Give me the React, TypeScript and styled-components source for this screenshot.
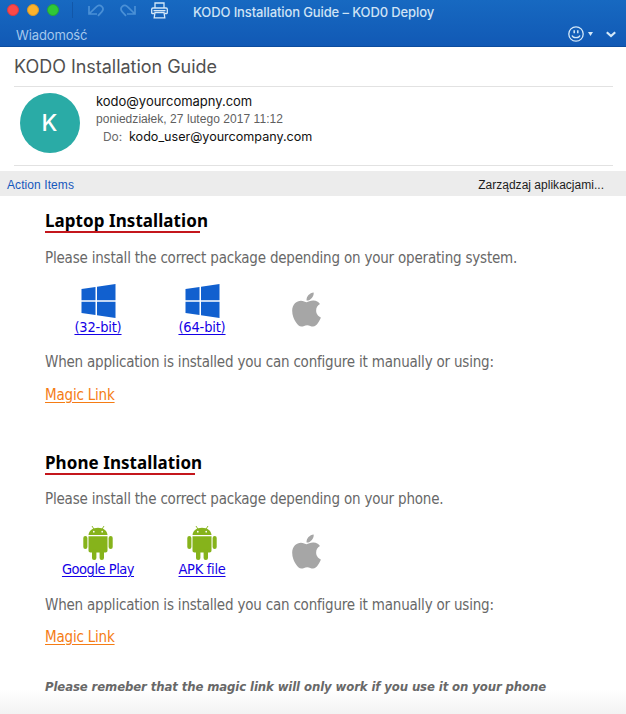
import React from "react";
import styled, { createGlobalStyle } from "styled-components";
import { FaApple } from "react-icons/fa";

const Global = createGlobalStyle`
  * { box-sizing: border-box; }
  body { margin: 0; background: #fff; }
`;

const ui = `"Inter", sans-serif`;
const arial = `"Liberation Sans", Arial, sans-serif`;
const tahoma = `"DejaVu Sans Condensed", "DejaVu Sans", sans-serif`;

const Window = styled.div`
  width: 626px;
  height: 714px;
  overflow: hidden;
  display: flex;
  flex-direction: column;
  background: #fff;
  font-family: ${ui};
  white-space: nowrap;
`;

const TitleBar = styled.header`
  height: 47px;
  flex: none;
  background: linear-gradient(#1769c1, #1159b5);
  border-bottom: 1px solid #0c4c9e;
`;

const TopRow = styled.div`
  height: 23px;
  display: flex;
  align-items: center;
  padding-left: 7px;
`;

const Lights = styled.div`
  display: flex;
  gap: 8px;
  width: 65px;
  height: 19px;
  align-items: center;
  margin-top: -3px;
`;

const Light = styled.span<{ $color: string; $edge: string }>`
  width: 12px;
  height: 12px;
  border-radius: 50%;
  background: ${(p) => p.$color};
  border: 1px solid ${(p) => p.$edge};
`;

const Divider = styled.span`
  width: 1px;
  height: 16px;
  margin-top: -3px;
  background: #1257a8;
`;

const Tools = styled.div`
  display: flex;
  align-items: center;
  margin-left: 15px;
  width: 105px;
  margin-top: -3px;
  svg { display: block; flex: none; }
  svg + svg { margin-left: 16px; }
  svg + svg + svg { margin-left: 15px; }
`;

const WindowTitle = styled.div`
  font: 500 13px/18px ${ui};
  letter-spacing: -0.115px;
  color: #cfe3f5;
  margin-top: 1px;
`;

const TabRow = styled.div`
  height: 23px;
  display: flex;
  align-items: center;
  padding: 0 10px 0 16px;
`;

const Tab = styled.span`
  font: 400 13px/18px ${ui};
  letter-spacing: -0.12px;
  color: #a5c8ec;
  flex: 1;
  margin-top: 1px;
`;

const TabIcons = styled.div`
  display: flex;
  align-items: center;
  margin-top: -1px;
  svg { display: block; }
`;

const Envelope = styled.section`
  height: 124px;
  flex: none;
  padding: 0 13px 0 14px;
`;

const Subject = styled.h1`
  margin: 0;
  height: 40px;
  border-bottom: 1px solid #e2e2e2;
  font: 400 18px/40px ${ui};
  letter-spacing: -0.03px;
  color: #505050;
`;

const Sender = styled.div`
  height: 79px;
  display: flex;
  padding: 6px 0 0 6px;
  border-bottom: 1px solid #e2e2e2;
`;

const Avatar = styled.div`
  width: 60px;
  height: 60px;
  border-radius: 50%;
  background: #2aaba6;
  color: #fff;
  font: 500 23px/61px ${ui};
  text-align: center;
  padding-right: 1px;
  margin-right: 16px;
`;

const SenderLines = styled.div`
  display: flex;
  flex-direction: column;
`;

const From = styled.div`
  height: 18px;
  font: 400 13px/16px ${ui};
  letter-spacing: -0.02px;
  color: #111;
`;

const Sent = styled.div`
  font: 400 12px/17px ${arial};
  letter-spacing: 0.051px;
  color: #5f5f5f;
`;

const To = styled.div`
  display: flex;
  padding-left: 7px;
  font: 400 12px/18px ${ui};
  letter-spacing: -0.1px;
  color: #6a6a6a;
  span {
    margin-left: 7px;
    font-size: 12.6px;
    letter-spacing: -0.02px;
    color: #111;
  }
`;

const ActionBar = styled.div`
  height: 25px;
  flex: none;
  background: #ececec;
  display: flex;
  align-items: center;
  justify-content: space-between;
  padding: 3px 22px 0 7px;
  font: 400 12px/18px ${arial};
  letter-spacing: 0.02px;
  color: #1c1c1c;
`;

const ActionLink = styled.span`
  color: #1558bd;
  letter-spacing: 0.08px;
`;

const Message = styled.main`
  flex: 1;
  padding: 0 0 0 45px;
  font: 400 15px/20px ${tahoma};
  letter-spacing: -0.2px;
  color: #686868;
  background: linear-gradient(#fff 0, #fff 494px, #f3f3f3 518px);
`;

const Section = styled.section`
  height: 242px;
`;

const Heading = styled.h2<{ $rule: number }>`
  margin: 0;
  padding-top: 13px;
  height: 37px;
  font: 700 17px/24px "Noto Sans", sans-serif;
  letter-spacing: 0.063px;
  color: #000;
  background: linear-gradient(#c4161c, #c4161c) 0 100% / ${(p) => p.$rule}px 2px no-repeat;
`;

const Lead = styled.p<{ $raised: boolean }>`
  margin: 0;
  padding-top: ${(p) => (p.$raised ? 14 : 15)}px;
  height: 34px;
`;

const Downloads = styled.div`
  display: grid;
  grid-template-columns: 104px 104px 104px;
  height: 85px;
  margin-left: 1px;
  padding-top: 17px;
`;

const Download = styled.div`
  display: flex;
  flex-direction: column;
  align-items: center;
  svg { display: block; flex: none; }
`;

const DownloadLink = styled.a<{ $spacing: number }>`
  font: 400 14.5px/19px ${tahoma};
  letter-spacing: ${(p) => p.$spacing}px;
  color: #1400e6;
  text-decoration: underline;
  text-decoration-thickness: 1px;
  text-underline-offset: 2px;
`;

const AppleSlot = styled.div`
  padding-top: 6px;
  color: #a6a6a6;
`;

const Hint = styled.p<{ $lowered: boolean }>`
  margin: 0;
  padding-top: ${(p) => (p.$lowered ? 1 : 0)}px;
  height: 20px;
`;

const Magic = styled.a`
  display: block;
  margin-top: 13px;
  color: #f57c14;
  text-decoration: underline;
  text-decoration-thickness: 1px;
  text-underline-offset: 2px;
`;

const Note = styled.p`
  margin: -4px 0 0;
  font: italic 700 13px/21px ${tahoma};
  letter-spacing: -0.107px;
`;

const CaretGap = styled.span`
  display: block;
  margin: 0 13px 0 4px;
`;

const UndoIcon = ({ flip = false }: { flip?: boolean }) => (
  <svg width="16" height="13" viewBox="0 0 16 13" fill="none" stroke="#4a90d6" strokeWidth="1.7">
    <g transform={flip ? "translate(16 0) scale(-1 1)" : undefined}>
      <path d="M1 2v8h8M1.500 9.500L8 3.200C9.800 1 12 .8 13.700 2.400c1.800 1.700 1.600 3.700 0 5.400L10 11.800" />
    </g>
  </svg>
);

const PrintIcon = () => (
  <svg width="17" height="17" viewBox="0 0 17 17" fill="none" stroke="#d4e8f8" strokeWidth="1.3">
    <path d="M4 6V1h9v5M3.500 11.500H1.300c-.4 0-.6-.3-.6-.7V7.200C.7 6.500 1.200 6 1.900 6h13.200c.7 0 1.200.5 1.200 1.200v3.600c0 .4-.2.7-.6.7h-2.200" />
    <path d="M2.500 8.600h12" />
    <path d="M4 10.500l-.8 5.300h10.600L13 10.500z" />
  </svg>
);

const SmileIcon = () => (
  <svg width="16" height="16" viewBox="0 0 16 16" fill="none" stroke="#d4e8f8" strokeWidth="1.3">
    <circle cx="8" cy="8" r="7.2" />
    <path d="M6.200 4.300v3M9.800 4.300v3" strokeWidth="1.5" />
    <path d="M4 9.500c1 2.800 7 2.800 8 0" />
  </svg>
);

const CaretIcon = () => (
  <svg width="5" height="4" viewBox="0 0 5 4">
    <path d="M0 0h5L2.500 4z" fill="#d4e8f8" />
  </svg>
);

const ChevronIcon = () => (
  <svg width="10" height="7" viewBox="0 0 10 7" fill="none" stroke="#d4e8f8" strokeWidth="2.2">
    <path d="M.8 1.200L5 5l4.200-3.800" />
  </svg>
);

const WindowsLogo = () => (
  <svg width="35" height="34" viewBox="0 0 35 34" fill="#1160cf">
    <path d="M.5 5l14-2v13.300H.5zM16 2.800L34.500 0v16.300H16zM.5 17.700h14V31l-14-2zM16 17.700h18.500V34L16 31.200z" />
  </svg>
);

const AndroidLogo = () => (
  <svg width="30" height="34" viewBox="0 1 30 34" fill="#86b31b">
    <path d="M9 1l2.200 3.500M21 1l-2.200 3.500" stroke="#86b31b" strokeWidth=".9" strokeLinecap="round" />
    <path d="M5.500 10C5.800 5.600 9.800 2.800 15 2.800s9.200 2.800 9.500 7.200z" />
    <circle cx="10.800" cy="6.700" r=".85" fill="#fff" />
    <circle cx="19.200" cy="6.700" r=".85" fill="#fff" />
    <path d="M5.500 11.200h19v14.300c0 1.200-.8 2-2 2h-15c-1.200 0-2-.8-2-2z" />
    <rect x=".3" y="11" width="4.100" height="13" rx="2" />
    <rect x="25.600" y="11" width="4.100" height="13" rx="2" />
    <rect x="9" y="24" width="4.400" height="11" rx="2.100" />
    <rect x="16.600" y="24" width="4.400" height="11" rx="2.100" />
  </svg>
);

type Item = { label: string; spacing: number };

function InstallSection({ title, rule, lead, logo, items, loose = false }: {
  title: string;
  rule: number;
  lead: string;
  logo: React.ReactNode;
  items: Item[];
  loose?: boolean;
}) {
  return (
    <Section>
      <Heading $rule={rule}>{title}</Heading>
      <Lead $raised={loose}>{lead}</Lead>
      <Downloads>
        {items.map((item) => (
          <Download key={item.label}>
            {logo}
            <DownloadLink $spacing={item.spacing}>{item.label}</DownloadLink>
          </Download>
        ))}
        <Download>
          <AppleSlot>
            <FaApple size={39} />
          </AppleSlot>
        </Download>
      </Downloads>
      <Hint $lowered={loose}>When application is installed you can configure it manually or using:</Hint>
      <Magic>Magic Link</Magic>
    </Section>
  );
}

export default function App() {
  return (
    <Window>
      <Global />
      <TitleBar>
        <TopRow>
          <Lights>
            <Light $color="#fc4948" $edge="#d93a45" />
            <Light $color="#fdb32b" $edge="#d99a2a" />
            <Light $color="#2fc838" $edge="#24a53a" />
          </Lights>
          <Divider />
          <Tools>
            <UndoIcon />
            <UndoIcon flip />
            <PrintIcon />
          </Tools>
          <WindowTitle>KODO Installation Guide – KOD0 Deploy</WindowTitle>
        </TopRow>
        <TabRow>
          <Tab>Wiadomość</Tab>
          <TabIcons>
            <SmileIcon />
            <CaretGap>
              <CaretIcon />
            </CaretGap>
            <ChevronIcon />
          </TabIcons>
        </TabRow>
      </TitleBar>
      <Envelope>
        <Subject>KODO Installation Guide</Subject>
        <Sender>
          <Avatar>K</Avatar>
          <SenderLines>
            <From>kodo@yourcomapny.com</From>
            <Sent>poniedziałek, 27 lutego 2017 11:12</Sent>
            <To>
              Do:<span>kodo_user@yourcompany.com</span>
            </To>
          </SenderLines>
        </Sender>
      </Envelope>
      <ActionBar>
        <ActionLink>Action Items</ActionLink>
        <span>Zarządzaj aplikacjami...</span>
      </ActionBar>
      <Message>
        <InstallSection
          title="Laptop Installation"
          rule={155}
          lead="Please install the correct package depending on your operating system."
          logo={<WindowsLogo />}
          items={[
            { label: "(32-bit)", spacing: -0.18 },
            { label: "(64-bit)", spacing: -0.18 },
          ]}
        />
        <InstallSection
          loose
          title="Phone Installation"
          rule={150}
          lead="Please install the correct package depending on your phone."
          logo={<AndroidLogo />}
          items={[
            { label: "Google Play", spacing: -0.48 },
            { label: "APK file", spacing: -0.29 },
          ]}
        />
        <Note>Please remeber that the magic link will only work if you use it on your phone</Note>
      </Message>
    </Window>
  );
}
